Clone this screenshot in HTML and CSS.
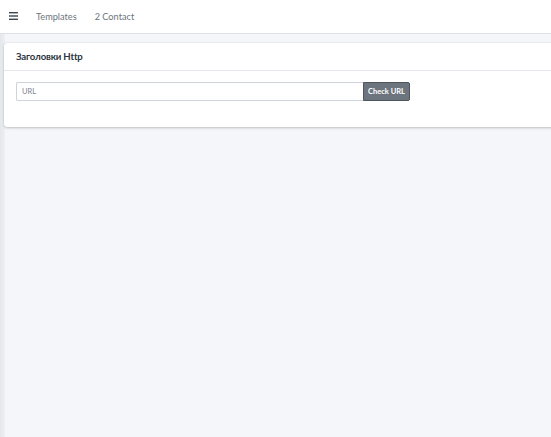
FILE: index.html
```
<!DOCTYPE html>
<html lang="ru">
<head>
<meta charset="utf-8">
<title>Заголовки Http</title>
<link rel="stylesheet" href="styles.css">
</head>
<body>
<div class="layout">
  <aside class="sidebar"></aside>
  <div class="wrapper">
    <nav class="navbar">
      <a class="nav-toggle" href="#" aria-label="menu">
        <svg width="9" height="8" viewBox="0 0 9 8"><rect x="0" y="0" width="9" height="1.4" fill="#3d4650"/><rect x="0" y="3.3" width="9" height="1.4" fill="#3d4650"/><rect x="0" y="6.6" width="9" height="1.4" fill="#3d4650"/></svg>
      </a>
      <a class="nav-link" href="#">Templates</a>
      <a class="nav-link" href="#">2 Contact</a>
    </nav>
    <main class="content">
      <section class="card">
        <header class="card-header">
          <h3 class="card-title">Заголовки Http</h3>
        </header>
        <div class="card-body">
          <form class="input-group">
            <input class="form-control" type="text" placeholder="URL">
            <button class="btn" type="button">Check URL</button>
          </form>
        </div>
      </section>
    </main>
  </div>
</div>
</body>
</html>
```
FILE: styles.css
```
* { box-sizing: border-box; }
html, body { margin: 0; padding: 0; height: 100%; }
body {
  font-family: "Lato", "Noto Sans", sans-serif;
  background: #f4f6f9;
  color: #212529;
  overflow: hidden;
}
.layout { display: flex; height: 100%; }
.sidebar {
  width: 5px;
  flex: none;
  background: linear-gradient(to right, #e4e7eb, #eef0f3);
}
.wrapper { flex: 1; display: flex; flex-direction: column; min-width: 0; }
.navbar {
  height: 34px;
  background: #fff;
  border-bottom: 1px solid #dee2e6;
  display: flex;
  align-items: center;
  padding-left: 4px;
  margin-left: -5px;
}
.nav-toggle { display: flex; align-items: center; padding: 0 0 1px 5px; width: 32px; }
.nav-link {
  color: #6c757d;
  text-decoration: none;
  font-size: 9.2px;
  margin-right: 18px;
  padding-bottom: 1px;
}
.content { padding: 9px 0 0 0; margin-left: -1px; }
.card {
  background: #fff;
  border-radius: 3px;
  box-shadow: 0 0 1px rgba(0,0,0,.2), 0 1px 3px rgba(0,0,0,.2);
  margin-right: -6px;
}
.card-header {
  height: 28px;
  border-bottom: 1px solid #e3e6ea;
  display: flex;
  align-items: center;
  padding: 0 12px;
}
.card-title { margin: 0; font-size: 9.6px; font-weight: 700; letter-spacing: -0.15px; color: #2b3440; }
.card-body { padding: 11px 12px 26px; }
.input-group { display: flex; margin: 0; }
.form-control {
  width: 347px;
  height: 19px;
  border: 1px solid #ced4da;
  border-right: none;
  border-radius: 2px 0 0 2px;
  padding: 0 5px;
  font-family: inherit;
  font-size: 7.5px;
  color: #495057;
  outline: none;
}
.form-control::placeholder { color: #7d858c; }
.btn {
  height: 19px;
  width: 47px;
  background: #6c757d;
  border: 1px solid #4f565c;
  border-radius: 0 2px 2px 0;
  color: #fff;
  font-family: inherit;
  font-size: 7.5px;
  font-weight: 700;
  padding: 0;
}
```
